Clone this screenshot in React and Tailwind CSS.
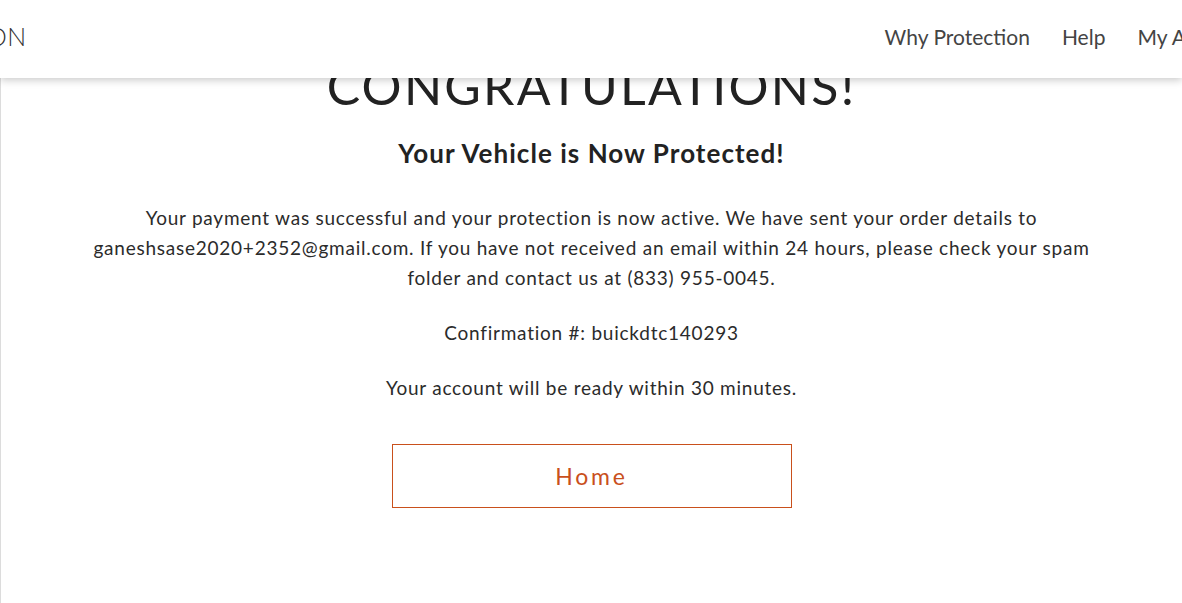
export default function App() {
  return (
    <div className="relative h-[603px] w-full overflow-hidden bg-white text-[#2b2b2b]" style={{ fontFamily: 'Lato, "Noto Sans", sans-serif' }}>
      {/* fixed header */}
      <header className="absolute inset-x-0 top-0 z-10 flex h-[78px] items-center justify-between bg-white pb-[4px] shadow-[0_2px_8px_rgba(0,0,0,0.22)]">
        <div className="-ml-[13px] text-[25px] font-light tracking-[0.02em] text-[#333]">ON</div>
        <nav className="-mr-[66px] flex items-center gap-[32px] text-[21px] text-[#444]">
          <span>Why Protection</span>
          <span>Help</span>
          <span>My Account</span>
        </nav>
      </header>

      <main className="flex h-full flex-col items-center border-l border-[#dcdcdc] pt-[56px]">
        <h1 className="text-[50px] leading-[60px] tracking-[0.045em] text-[#222]">CONGRATULATIONS!</h1>
        <h2 className="mt-[22px] text-[26px] font-bold leading-[30px] tracking-[0.04em] text-[#222]">Your Vehicle is Now Protected!</h2>
        <p className="mt-[35px] max-w-[1020px] text-center text-[19px] leading-[30px] tracking-[0.04em]">
          Your payment was successful and your protection is now active. We have sent your order details to ganeshsase2020+2352@gmail.com. If you have not received an email within 24 hours, please check your spam folder and contact us at (833) 955-0045.
        </p>
        <p className="mt-[25px] text-[19px] leading-[30px] tracking-[0.04em]">Confirmation #: buickdtc140293</p>
        <p className="mt-[25px] text-[19px] leading-[30px] tracking-[0.04em]">Your account will be ready within 30 minutes.</p>
        <button className="mt-[41px] h-[64px] w-[400px] border border-[#c9501c] text-[23px] tracking-[0.12em] text-[#c9501c]">
          Home
        </button>
      </main>
    </div>
  )
}
